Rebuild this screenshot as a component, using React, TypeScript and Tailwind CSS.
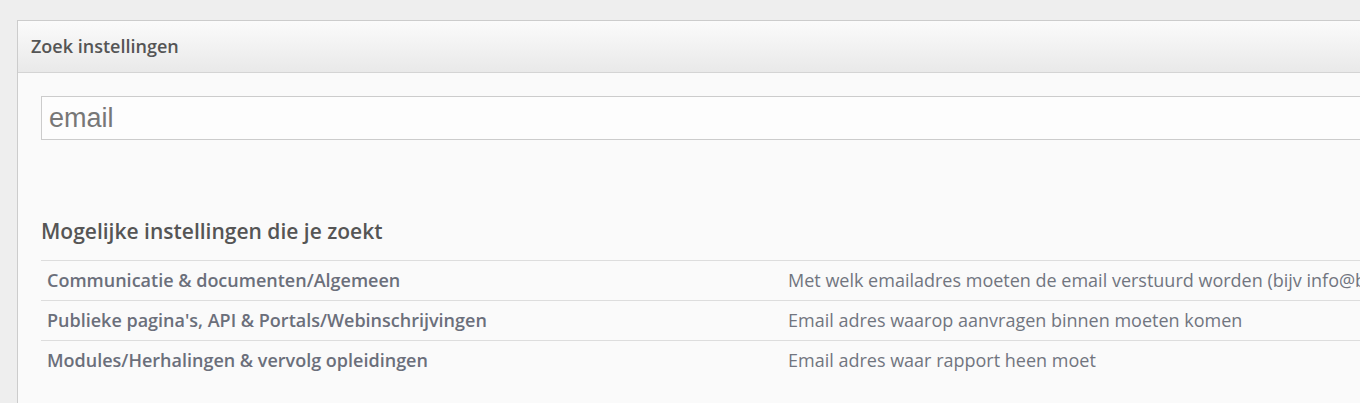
import React from 'react';

const results = [
  {
    path: 'Communicatie & documenten/Algemeen',
    description: 'Met welk emailadres moeten de email verstuurd worden (bijv info@bedrijf.nl)',
  },
  {
    path: "Publieke pagina's, API & Portals/Webinschrijvingen",
    description: 'Email adres waarop aanvragen binnen moeten komen',
  },
  {
    path: 'Modules/Herhalingen & vervolg opleidingen',
    description: 'Email adres waar rapport heen moet',
  },
];

export default function App() {
  return (
    <div className="h-[403px] w-[1360px] overflow-hidden bg-[#eeeeee] pt-[20px] pl-[17px] font-['Open_Sans',sans-serif]">
      <div className="w-[1500px] border border-[#cccccc] bg-[#fafafa]">
        {/* Panel header */}
        <div className="flex h-[52px] items-center border-b border-[#d4d4d4] bg-gradient-to-b from-[#fbfbfb] to-[#e9e9e9] px-[13px]">
          <h3 className="text-[18px] font-semibold text-[#555555]">Zoek instellingen</h3>
        </div>

        <div className="px-[23px] pt-[23px] pb-[40px]">
          <input
            type="text"
            defaultValue="email"
            className="h-[44px] w-full border border-[#cccccc] bg-[#fdfdfd] px-[7px] font-['Liberation_Sans',Arial,sans-serif] text-[27px] text-[#777777] outline-none"
          />

          <h4 className="mt-[77px] text-[21px] leading-[28px] font-semibold text-[#555555]">
            Mogelijke instellingen die je zoekt
          </h4>

          <table className="mt-[15px] w-full border-collapse">
            <tbody>
              {results.map(r => (
                <tr key={r.path} className="border-t border-[#dddddd]">
                  <td className="h-[40px] w-[747px] px-[6px] text-[18px] font-semibold whitespace-nowrap text-[#6b6f7b]">
                    {r.path}
                  </td>
                  <td className="h-[40px] px-[0px] text-[18px] whitespace-nowrap text-[#71757f]">
                    {r.description}
                  </td>
                </tr>
              ))}
            </tbody>
          </table>
        </div>
      </div>
    </div>
  );
}
